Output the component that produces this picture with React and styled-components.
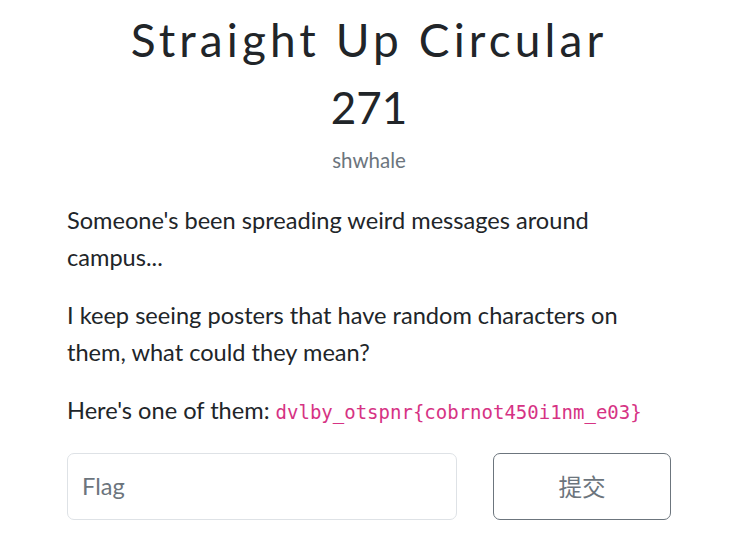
import React from 'react';
import styled, { createGlobalStyle } from 'styled-components';

const GlobalStyle = createGlobalStyle`
  body {
    margin: 0;
    background: #fff;
    font-family: Lato, "Noto Sans", sans-serif;
    color: #212529;
  }
`;

const Modal = styled.div`
  width: 604px;
  margin: 0 auto;
  padding: 12px 0 20px;
`;

const Title = styled.h2`
  margin: 0;
  text-align: center;
  font-size: 46px;
  font-weight: 400;
  letter-spacing: 4.1px;
  line-height: 1.2;
`;

const Points = styled.h3`
  margin: 14px 0 0;
  text-align: center;
  font-size: 44px;
  font-weight: 400;
  line-height: 1.2;
`;

const Author = styled.div`
  margin: 14px 0 0;
  text-align: center;
  font-size: 20.5px;
  color: #6c757d;
`;

const Description = styled.div`
  margin-top: 30px;
  font-size: 23.6px;
  line-height: 37px;
`;

const Para = styled.p`
  margin: 0 0 21px;
`;

const Code = styled.code`
  font-family: "DejaVu Sans Mono", monospace;
  font-size: 19px;
  color: #d63384;
`;

const FormRow = styled.form`
  display: flex;
  gap: 36px;
  margin-top: 22px;
`;

const Input = styled.input`
  flex: 0 0 390px;
  box-sizing: border-box;
  height: 67px;
  padding: 0 14px;
  border: 1px solid #dee2e6;
  border-radius: 7px;
  font-family: Lato, "Noto Sans", sans-serif;
  font-size: 23.6px;
  color: #495057;
  &::placeholder {
    color: #6c757d;
  }
`;

const Submit = styled.button`
  flex: 1;
  height: 67px;
  background: #fff;
  border: 1px solid #6c757d;
  border-radius: 7px;
  font-family: Lato, "Noto Sans CJK SC", sans-serif;
  font-size: 23.6px;
  color: #6c757d;
`;

export default function App() {
  return (
    <>
      <GlobalStyle />
      <Modal>
        <Title>Straight Up Circular</Title>
        <Points>271</Points>
        <Author>shwhale</Author>
        <Description>
          <Para>Someone's been spreading weird messages around campus...</Para>
          <Para>I keep seeing posters that have random characters on them, what could they mean?</Para>
          <Para>
            Here's one of them: <Code>dvlby_otspnr{'{'}cobrnot450i1nm_e03{'}'}</Code>
          </Para>
        </Description>
        <FormRow onSubmit={e => e.preventDefault()}>
          <Input placeholder="Flag" />
          <Submit type="submit">提交</Submit>
        </FormRow>
      </Modal>
    </>
  );
}
